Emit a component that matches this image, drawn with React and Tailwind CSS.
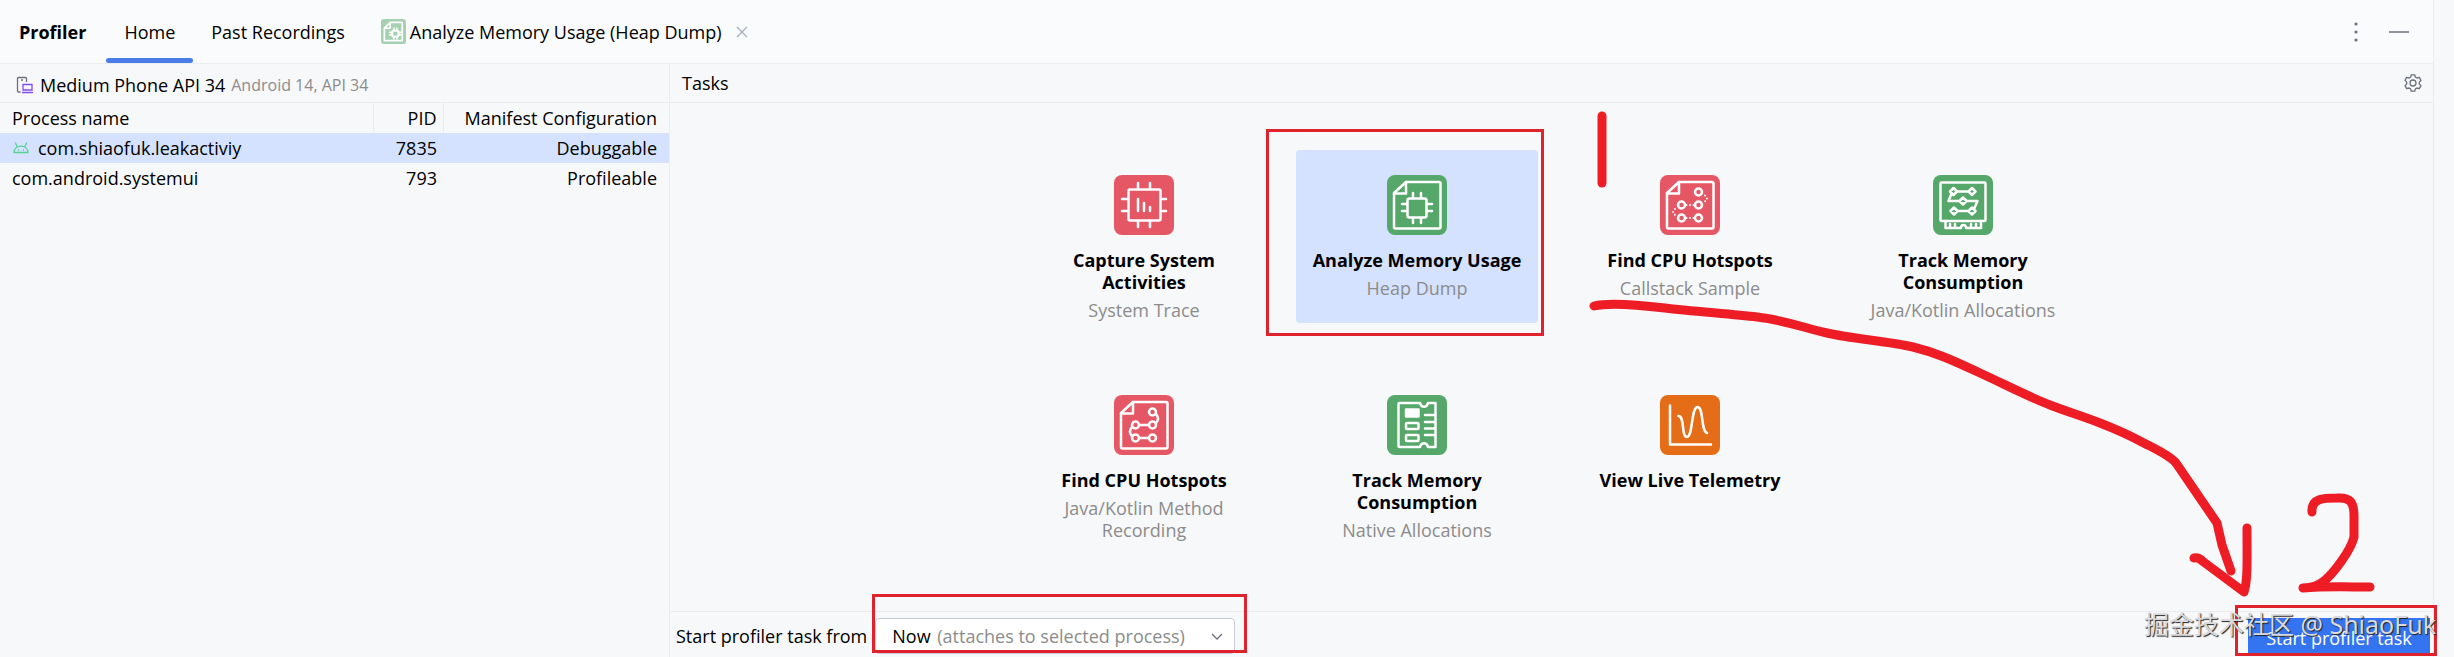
import { useState } from "react";

const FileFrame = () => (
    <>
        <path d="M19 7H52a1.5 1.5 0 0 1 1.5 1.5V52a1.5 1.5 0 0 1-1.5 1.5H8.5A1.5 1.5 0 0 1 7 52V18Z" />
        <path d="M19 7V18.5H7" />
    </>
);

const TraceIcon = () => (
    <>
        <rect x="14.5" y="14.5" width="32" height="31" rx="1.5" />
        <path d="M24 8v6M36 8v6M24 46v6M36 46v6M8 24h6M8 36h6M47 24h5M47 36h5M24 24v12M30 28v8M36 32v4" />
    </>
);

const HeapIcon = () => (
    <>
        <FileFrame />
        <rect x="20.5" y="23.5" width="19" height="19" rx="2" />
        <path d="M26 18v5M34 18v5M26 43v5M34 43v5M15 29h5M15 36h5M40 29h5M40 36h5" />
    </>
);

// heavier strokes so it survives at tab size
const HeapTabIcon = () => (
    <g strokeWidth="4">
        <path d="M22 8H51V52H8V22ZM22 8V22H8" />
        <rect x="27" y="28" width="15" height="14" rx="3" strokeWidth="5" />
        <path d="M31 22v4M38 22v4M31 44v4M38 44v4M21 32h4M21 38h4M44 32h4M44 38h4" />
    </g>
);

const CallNodes = () => (
    <>
        <circle cx="38.5" cy="17" r="3.5" />
        <circle cx="21.5" cy="30" r="3.5" />
        <circle cx="38.5" cy="30" r="3.5" />
        <circle cx="21.5" cy="43" r="3.5" />
        <circle cx="38.5" cy="43" r="3.5" />
    </>
);

const SampleIcon = () => (
    <>
        <FileFrame />
        <CallNodes />
        <path strokeWidth="2" strokeDasharray="0 3.5" d="M26.5 30h9M26.5 43h9M45 20.5l2 3-2 3M15 34l-2 3 2 3" />
    </>
);

const MethodIcon = () => (
    <>
        <FileFrame />
        <CallNodes />
        <path d="M25 30h10M25 43h10M42 19c2.5 3 2.5 6.5 0 9M18 32c-2.5 3-2.5 6.5 0 9" />
    </>
);

const AllocationIcon = () => (
    <>
        <rect x="7.5" y="7.5" width="45" height="38.5" rx="1" />
        <path d="M12.5 46v7H28c0-4 5-4 5 0h15V46M17 49v3M22 49v3M38 49v3M43 49v3" />
        <path d="M20.5 13l3.5 3.5-3.5 3.5-3.5-3.5ZM39 13l3.5 3.5-3.5 3.5-3.5-3.5ZM30 22.5l3.5 3.5-3.5 3.5-3.5-3.5ZM21 32.5l3.5 3.5-3.5 3.5-3.5-3.5ZM39 32.5l3.5 3.5-3.5 3.5-3.5-3.5Z" />
        <path d="M24.5 16.5h11M18.5 18.5L15.5 26H26M34 26h10.5L41 34M24.5 36h11" />
    </>
);

const NativeIcon = () => (
    <>
        <path d="M12.5 8H33c1 5 7 5 8 0h7.5V52H41c-1-5-7-5-8 0H12.5A1 1 0 0 1 11.5 51V9A1 1 0 0 1 12.5 8Z" />
        <rect x="19" y="14.5" width="12.5" height="7" fill="#fff" />
        <rect x="19" y="28" width="12.5" height="6" rx="1" />
        <rect x="19" y="40" width="12.5" height="6" rx="1" />
        <path d="M38 20h10M38 27h10M38 33.5h10M38 40h10" />
    </>
);

const TelemetryIcon = () => (
    <path d="M10 10.5V49.5H51M18.5 21C25 21 21 42 27 42S31 12 37.5 12 40.5 36 47 38" />
);

const tasks = [
    { title: "Capture System Activities", sub: "System Trace", color: "#e55765", Icon: TraceIcon },
    { title: "Analyze Memory Usage", sub: "Heap Dump", color: "#55a76a", Icon: HeapIcon },
    { title: "Find CPU Hotspots", sub: "Callstack Sample", color: "#e55765", Icon: SampleIcon },
    { title: "Track Memory Consumption", sub: "Java/Kotlin Allocations", color: "#55a76a", Icon: AllocationIcon },
    { title: "Find CPU Hotspots", sub: "Java/Kotlin Method Recording", color: "#e55765", Icon: MethodIcon },
    { title: "Track Memory Consumption", sub: "Native Allocations", color: "#55a76a", Icon: NativeIcon },
    { title: "View Live Telemetry", sub: "", color: "#e66d17", Icon: TelemetryIcon },
];

const processes = [
    { name: "com.shiaofuk.leakactiviy", pid: 7835, config: "Debuggable", icon: true },
    { name: "com.android.systemui", pid: 793, config: "Profileable" },
];

const TaskIcon = ({ color, Icon, className }) => (
    <svg viewBox="0 0 60 60" className={className} fill="none" stroke="#fff" strokeWidth="2.5" strokeLinecap="round" strokeLinejoin="round">
        <rect width="60" height="60" rx="8" fill={color} stroke="none" />
        <Icon />
    </svg>
);

const AndroidIcon = () => (
    <svg viewBox="0 0 18 14" className="w-[18px] h-[14px]" fill="none" stroke="#55d492" strokeWidth="1.3" strokeLinecap="round" strokeLinejoin="round">
        <path d="M2 11.5C2.5 3 15.5 3 16 11.5ZM5 5.5L3.5 2M13 5.5L14.5 2" />
        <path d="M6.5 9v.3M11.5 9v.3" />
    </svg>
);

const DeviceIcon = () => (
    <svg viewBox="0 0 18 18" className="w-[18px] h-[18px]" fill="none" strokeWidth="1.3">
        <path stroke="#6c707e" d="M4.5 16H2.5a1 1 0 0 1-1-1V2.5a1 1 0 0 1 1-1h7a1 1 0 0 1 1 1V6M5 4h2" />
        <path stroke="#834df0" d="M7 8.5h9V14H7ZM6 16.5h11" />
    </svg>
);

const Profiler = () => {
    const [selectedTask, setSelectedTask] = useState(1);
    const [selectedProcess, setSelectedProcess] = useState(0);

    return (
        <div className="relative min-h-screen flex bg-[#f7f8fa] font-['Open_Sans',sans-serif] text-[18px] leading-[22px] text-black overflow-hidden">
            <div className="flex-1 flex flex-col min-w-0 border-r border-[#ebecf0]">

                {/* Tool window tabs */}
                <header className="h-16 shrink-0 flex items-center justify-between bg-[#fafbfc] border-b border-[#ebecf0] pl-[19px] pr-6">
                    <div className="flex items-center h-full">
                        <h1 className="font-bold mr-5">Profiler</h1>
                        <nav className="flex items-center h-full">
                            <a href="#home" className="relative h-full flex items-center px-[18px]">
                                Home
                                <span className="absolute left-0 bottom-0 w-full h-[5px] rounded-full bg-[#4a7de8]" />
                            </a>
                            <a href="#recordings" className="h-full flex items-center px-[18px]">Past Recordings</a>
                            <a href="#heap" className="h-full flex items-center gap-1 pl-[18px] pr-3.5">
                                <TaskIcon color="#55a76a" Icon={HeapTabIcon} className="size-[25px] opacity-50" />
                                Analyze Memory Usage (Heap Dump)
                            </a>
                        </nav>
                        <button aria-label="Close tab">
                            <svg viewBox="0 0 12 12" className="size-3" stroke="#a8adbd" strokeWidth="1.3">
                                <path d="M1 1l10 10M11 1L1 11" />
                            </svg>
                        </button>
                    </div>
                    <div className="flex items-center gap-[30px]">
                        <button aria-label="More options">
                            <svg viewBox="0 0 6 22" className="w-1.5 h-[22px]" fill="#6c707e">
                                <circle cx="3" cy="3" r="1.6" />
                                <circle cx="3" cy="11" r="1.6" />
                                <circle cx="3" cy="19" r="1.6" />
                            </svg>
                        </button>
                        <button aria-label="Hide">
                            <svg viewBox="0 0 20 4" className="w-5 h-1" stroke="#6c707e" strokeWidth="1.5">
                                <path d="M0 2h20" />
                            </svg>
                        </button>
                    </div>
                </header>

                <div className="flex-1 flex">
                    {/* Device and process list */}
                    <aside className="w-[670px] shrink-0 border-r border-[#ebecf0]">
                        <div className="h-[39px] flex items-center gap-1.5 px-4 pt-1 border-b border-[#ebecf0]">
                            <DeviceIcon />
                            <span>Medium Phone API 34</span>
                            <span className="text-[16px] text-[#8c8c8c]">Android 14, API 34</span>
                        </div>
                        <table className="w-full table-fixed">
                            <thead>
                                <tr className="h-[30px]">
                                    <th className="text-left font-normal pl-3">Process name</th>
                                    <th className="w-[70px] text-right font-normal pr-1.5 border-x border-[#ebecf0]">PID</th>
                                    <th className="w-[226px] text-right font-normal pr-3">Manifest Configuration</th>
                                </tr>
                            </thead>
                            <tbody>
                                {processes.map((p, i) => (
                                    <tr
                                        key={p.pid}
                                        onClick={() => setSelectedProcess(i)}
                                        className={i === selectedProcess ? "h-[30px] bg-[#d4e2ff]" : "h-[30px]"}
                                    >
                                        <td className="pl-3">
                                            <div className="flex items-center gap-2">
                                                {p.icon && <AndroidIcon />}
                                                {p.name}
                                            </div>
                                        </td>
                                        <td className="text-right pr-1.5">{p.pid}</td>
                                        <td className="text-right pr-3">{p.config}</td>
                                    </tr>
                                ))}
                            </tbody>
                        </table>
                    </aside>

                    <main className="flex-1 flex flex-col min-w-0">
                        <div className="h-[39px] flex items-center justify-between pl-3 pr-[10px] border-b border-[#ebecf0]">
                            <h2>Tasks</h2>
                            <button aria-label="Settings">
                                <svg viewBox="0 0 20 20" className="size-5" fill="none" stroke="#6c707e" strokeWidth="1.3" strokeLinejoin="round">
                                    <circle cx="10" cy="10" r="3" />
                                    <path d="M8.3 1.8h3.4l.7 2.3 1.5.9 2.4-.6 1.7 2.9-1.7 1.8v1.8l1.7 1.8-1.7 2.9-2.4-.6-1.5.9-.7 2.3H8.3l-.7-2.3-1.5-.9-2.4.6L2 12.7l1.7-1.8V9.1L2 7.3l1.7-2.9 2.4.6 1.5-.9Z" />
                                </svg>
                            </button>
                        </div>

                        {/* Task cards */}
                        <div className="flex-1 flex justify-center items-start pt-[47px] pl-1">
                            <div className="grid grid-cols-[repeat(4,242px)] items-start gap-x-[31px] gap-y-[25px]">
                                {tasks.map((task, i) => (
                                    <button
                                        key={i}
                                        onClick={() => setSelectedTask(i)}
                                        className={`relative flex flex-col items-center rounded px-4 pt-[25px] pb-6 ${i === selectedTask ? "bg-[#d4e2ff]" : ""}`}
                                    >
                                        <TaskIcon color={task.color} Icon={task.Icon} className="size-[60px] mb-3.5" />
                                        <span className="font-bold">{task.title}</span>
                                        {task.sub && <span className="mt-1.5 text-[#8c8c8c]">{task.sub}</span>}
                                        {i === 1 && (
                                            <span className="absolute -left-[30px] -right-1.5 -top-[21px] -bottom-[13px] border-3 border-[#e0222d]" />
                                        )}
                                    </button>
                                ))}
                            </div>
                        </div>

                        {/* Start bar */}
                        <div className="h-[46px] shrink-0 flex items-center justify-between pt-0.5 pl-1.5 pr-[3px] border-t border-[#ebecf0]">
                            <div className="flex items-center gap-2">
                                <label htmlFor="start-from">Start profiler task from</label>
                                <div className="relative">
                                    <select id="start-from" className="appearance-none w-[360px] h-9 pl-4 rounded border border-[#c9ccd6] bg-white">
                                        <option>Now</option>
                                        <option>Process start</option>
                                    </select>
                                    <span className="absolute left-[62px] top-[7px] text-[#8c8c8c] pointer-events-none">(attaches to selected process)</span>
                                    <svg viewBox="0 0 12 8" className="absolute right-3 top-[15px] w-3 h-2 pointer-events-none" fill="none" stroke="#6c707e" strokeWidth="1.3">
                                        <path d="M1 1l5 5 5-5" />
                                    </svg>
                                    <span className="absolute -left-[3px] -right-3 -top-6 bottom-px border-3 border-[#e0222d] pointer-events-none" />
                                </div>
                            </div>
                            <div className="relative">
                                <button className="w-[182px] h-[35px] pt-1 text-white bg-[#3574f0]">Start profiler task</button>
                                <span className="absolute -left-[13px] -right-[7px] -top-[13px] -bottom-[3px] border-3 border-[#e0222d] pointer-events-none" />
                                <span className="absolute -right-[6px] -top-[9px] whitespace-nowrap text-[25px] leading-[30px] font-['Noto_Sans','Noto_Sans_CJK_SC',sans-serif] text-[#d9dadd] [text-shadow:1px_1px_1px_#222] pointer-events-none">
                                    掘金技术社区 @ ShiaoFuk
                                </span>
                            </div>
                        </div>
                    </main>
                </div>
            </div>
            <div className="w-5 shrink-0" />

            {/* Hand-drawn step marks */}
            <svg viewBox="0 0 2454 657" className="absolute inset-0 w-full h-full pointer-events-none" fill="none" stroke="#ee1c25" strokeWidth="9" strokeLinecap="round" strokeLinejoin="round">
                <path d="M1602 116V183" />
                <path d="M1594 306C1610 302 1640 305 1665 308S1730 314 1757 317 1801 327 1827 333 1888 341 1913 347 1958 363 1980 373 2029 397 2050 405 2082 416 2100 423 2127 434 2140 441 2168 454 2176 463L2217 523 2222 545 2231 571" />
                <path d="M2194 558C2199 557 2201 560 2205 563L2244 592C2248 580 2247 560 2247 528" />
                <path d="M2312 512C2311 498 2324 498 2337 498 2350 497 2354 502 2354 516V537C2351 550 2334 573 2324 581 2317 587 2310 588 2303 588 2325 586 2350 587 2370 587" />
            </svg>
        </div>
    );
};

export default function App() {
    return <Profiler />;
}
